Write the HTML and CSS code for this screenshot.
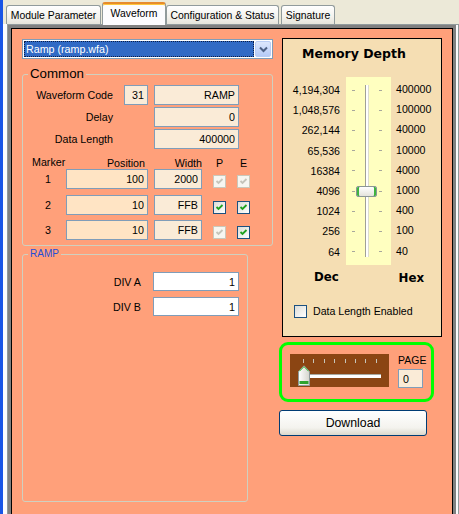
FILE: index.html
```html
<!DOCTYPE html>
<html lang="en">
<head>
    <meta charset="UTF-8">
    <title>Waveform</title>
    <link rel="stylesheet" href="styles.css">
</head>
<body>

<div class="tabs">
    <div class="tab tab-module">Module Parameter</div>
    <div class="tab tab-wave active">Waveform</div>
    <div class="tab tab-config">Configuration &amp; Status</div>
    <div class="tab tab-sign">Signature</div>
</div>

<div class="sheet">
    <div class="page">
        <div class="panel">

            <div class="left">
                <div class="combo">
                    <div class="combo-sel">Ramp (ramp.wfa)</div>
                    <div class="combo-btn">
                        <svg width="9" height="7" viewBox="0 0 9 7"><path d="M1 1.5 L4.5 5 L8 1.5" fill="none" stroke="#4d6185" stroke-width="2"/></svg>
                    </div>
                </div>

                <fieldset class="group common">
                    <legend>Common</legend>
                    <div class="row">
                        <label class="lbl">Waveform Code</label>
                        <input class="box code" type="text" value="31">
                        <input class="box wide near" type="text" value="RAMP">
                    </div>
                    <div class="row">
                        <label class="lbl">Delay</label>
                        <input class="box wide far" type="text" value="0">
                    </div>
                    <div class="row">
                        <label class="lbl">Data Length</label>
                        <input class="box wide far" type="text" value="400000">
                    </div>

                    <div class="mk-row mk-head">
                        <span class="c-num head-marker">Marker</span>
                        <span class="c-pos">Position</span>
                        <span class="c-wid">Width</span>
                        <span class="c-p">P</span>
                        <span class="c-e">E</span>
                    </div>
                    <div class="mk-row">
                        <span class="c-num">1</span>
                        <input class="box c-pos pos" type="text" value="100">
                        <input class="box c-wid" type="text" value="2000">
                        <span class="c-p chk off"><svg width="11" height="11" viewBox="0 0 11 11"><path d="M2.5 5 L4.5 7 L8.5 3" fill="none" stroke="#c5c4ba" stroke-width="1.8"/></svg></span>
                        <span class="c-e chk off"><svg width="11" height="11" viewBox="0 0 11 11"><path d="M2.5 5 L4.5 7 L8.5 3" fill="none" stroke="#c5c4ba" stroke-width="1.8"/></svg></span>
                    </div>
                    <div class="mk-row">
                        <span class="c-num">2</span>
                        <input class="box c-pos pos" type="text" value="10">
                        <input class="box c-wid" type="text" value="FFB">
                        <span class="c-p chk on"><svg width="11" height="11" viewBox="0 0 11 11"><path d="M2.5 5 L4.5 7 L8.5 3" fill="none" stroke="#21a121" stroke-width="1.8"/></svg></span>
                        <span class="c-e chk on"><svg width="11" height="11" viewBox="0 0 11 11"><path d="M2.5 5 L4.5 7 L8.5 3" fill="none" stroke="#21a121" stroke-width="1.8"/></svg></span>
                    </div>
                    <div class="mk-row">
                        <span class="c-num">3</span>
                        <input class="box c-pos pos" type="text" value="10">
                        <input class="box c-wid" type="text" value="FFB">
                        <span class="c-p chk off"><svg width="11" height="11" viewBox="0 0 11 11"><path d="M2.5 5 L4.5 7 L8.5 3" fill="none" stroke="#c5c4ba" stroke-width="1.8"/></svg></span>
                        <span class="c-e chk on"><svg width="11" height="11" viewBox="0 0 11 11"><path d="M2.5 5 L4.5 7 L8.5 3" fill="none" stroke="#21a121" stroke-width="1.8"/></svg></span>
                    </div>
                </fieldset>

                <fieldset class="group ramp">
                    <legend>RAMP</legend>
                    <div class="row">
                        <label class="lbl-div">DIV A</label>
                        <input class="box white" type="text" value="1">
                    </div>
                    <div class="row">
                        <label class="lbl-div">DIV B</label>
                        <input class="box white" type="text" value="1">
                    </div>
                </fieldset>
            </div>

            <div class="right">
                <div class="memory">
                    <div class="mem-title">Memory Depth</div>
                    <div class="scale">
                        <div class="dec-col">
                            <div>4,194,304</div>
                            <div>1,048,576</div>
                            <div>262,144</div>
                            <div>65,536</div>
                            <div>16384</div>
                            <div>4096</div>
                            <div>1024</div>
                            <div>256</div>
                            <div>64</div>
                        </div>
                        <div class="band">
                            <div class="tick-row"><i></i><i></i></div>
                            <div class="tick-row"><i></i><i></i></div>
                            <div class="tick-row"><i></i><i></i></div>
                            <div class="tick-row"><i></i><i></i></div>
                            <div class="tick-row"><i></i><i></i></div>
                            <div class="tick-row"><i></i><i></i></div>
                            <div class="tick-row"><i></i><i></i></div>
                            <div class="tick-row"><i></i><i></i></div>
                            <div class="tick-row"><i></i><i></i></div>
                            <div class="v-track"></div>
                            <div class="v-thumb"></div>
                        </div>
                        <div class="hex-col">
                            <div>400000</div>
                            <div>100000</div>
                            <div>40000</div>
                            <div>10000</div>
                            <div>4000</div>
                            <div>1000</div>
                            <div>400</div>
                            <div>100</div>
                            <div>40</div>
                        </div>
                    </div>
                    <div class="scale-foot">
                        <span class="foot-dec">Dec</span>
                        <span class="foot-hex">Hex</span>
                    </div>
                    <div class="chk-line">
                        <span class="chk on empty"></span>
                        <span>Data Length Enabled</span>
                    </div>
                </div>

                <div class="pager">
                    <div class="page-slider">
                        <div class="h-ticks"><i></i><i></i><i></i><i></i><i></i><i></i><i></i><i></i></div>
                        <div class="h-track"></div>
                        <svg class="h-thumb" width="12" height="21" viewBox="0 0 12 21">
                            <defs>
                                <linearGradient id="thumbfill" x1="0" y1="0" x2="1" y2="0">
                                    <stop offset="0" stop-color="#ffffff"/>
                                    <stop offset="1" stop-color="#d4d4cc"/>
                                </linearGradient>
                            </defs>
                            <path d="M0.5 6.5 L6 0.8 L11.5 6.5 L11.5 20.5 L0.5 20.5 Z" fill="url(#thumbfill)" stroke="#8e9a9a"/>
                            <path d="M1.5 6.3 L6 1.8 L10.5 6.3" fill="none" stroke="#4fc94f" stroke-width="1"/>
                            <rect x="1.5" y="16" width="9" height="3" fill="#2ea32e"/>
                        </svg>
                    </div>
                    <div class="page-num">
                        <div class="page-lbl">PAGE</div>
                        <input class="box page-box" type="text" value="0">
                    </div>
                </div>

                <button class="download" type="button">Download</button>
            </div>

        </div>
    </div>
</div>

</body>
</html>
```

FILE: styles.css
```css
body {
    margin: 0;
    height: 514px;
    overflow: hidden;
    border-left: 3px solid #1955e6;
    background-color: #ece9d8;
    font-family: "Liberation Sans", Arial, sans-serif;
    font-size: 10.7px;
    color: #000;
}

/* ---- tabs ---- */
.tabs {
    height: 24px;
    display: flex;
    align-items: flex-end;
    padding-left: 3px;
}

.tab {
    height: 19px;
    box-sizing: border-box;
    border: 1px solid #919b9c;
    border-bottom: none;
    border-radius: 3px 3px 0 0;
    background: linear-gradient(#ffffff, #f3f2ed 60%, #e6e4db);
    font-size: 10.4px;
    line-height: 19px;
    text-align: center;
    white-space: nowrap;
}

.tab-module { width: 95px; margin-right: 1px; }
.tab-wave { width: 64px; }
.tab-config { width: 113px; margin-right: 2px; }
.tab-sign { width: 54px; }

.tab.active {
    position: relative;
    height: 23px;
    margin-bottom: -1px;
    border-top: 2px solid #e68b2c;
    box-shadow: inset 0 1px 0 #ffc73c;
    background: #fcfcfe;
    line-height: 19px;
}

/* ---- tab page ---- */
.sheet {
    width: 456px;
    background-color: #fcfcfe;
    padding-left: 4px;
    box-sizing: border-box;
}

.page {
    border: 1px solid #919b9c;
    border-bottom: none;
    padding-right: 2px;
}

.panel {
    height: 476px;
    display: flex;
    align-items: flex-start;
    background-color: #ffa07a;
    border: 3px solid #808080;
    border-bottom: none;
    box-shadow: inset 1px 1px 0 #000, inset -1px 0 0 #000;
    padding: 10px 0 0 11px;
}

/* ---- left column ---- */
.left {
    width: 251px;
    margin-top: 1px;
}

.combo {
    height: 20px;
    box-sizing: border-box;
    border: 1px solid #7f9db9;
    background: #fff;
    display: flex;
    padding: 1px;
}

.combo-sel {
    flex: 1;
    background-color: #316ac5;
    color: #fff;
    border: 1px dotted #0c1d45;
    line-height: 14px;
    padding-left: 1px;
}

.combo-btn {
    width: 16px;
    margin-left: 1px;
    background: linear-gradient(#dce7fd, #b6cbf7);
    border: 1px solid #b9cdf5;
    border-radius: 2px;
    box-sizing: border-box;
    display: flex;
    align-items: center;
    justify-content: center;
}

.group {
    margin: 0;
    min-width: 0;
    border: 1px solid #d0d0bf;
    border-radius: 3px;
    padding: 0;
}

.group legend {
    margin-left: 5px;
    padding: 0 2px;
}

.common {
    margin-top: 8px;
    padding-bottom: 5px;
}

.common legend {
    font-size: 13.3px;
    line-height: 14px;
}

.ramp {
    width: 226px;
    box-sizing: border-box;
    margin-top: 2px;
    padding-top: 10px;
    padding-bottom: 185px;
}

.ramp legend {
    font-size: 10px;
    line-height: 12px;
    color: #1f4fd8;
}

.row {
    display: flex;
    align-items: center;
    margin-top: 2px;
}

.common .row:first-of-type {
    margin-top: 4px;
}

.ramp .row + .row {
    margin-top: 6px;
}

.lbl {
    width: 90px;
    text-align: right;
}

.lbl-div {
    width: 118px;
    text-align: right;
}

.box {
    height: 20px;
    box-sizing: border-box;
    margin: 0;
    border: 1px solid #7f9db9;
    padding: 0 3px;
    background-color: #faebd7;
    font-family: "Liberation Sans", Arial, sans-serif;
    font-size: 10.7px;
    color: #000;
    text-align: right;
    outline: none;
}

.box.code { width: 24px; margin-left: 11px; }
.box.wide { width: 85px; }
.box.near { margin-left: 6px; }
.box.far { margin-left: 41px; }

.box.white {
    width: 86px;
    height: 19px;
    margin-left: 12px;
    background-color: #fff;
}

.box.pos {
    background-color: #ffe4c4;
}

.mk-row {
    display: flex;
    align-items: flex-end;
    margin-top: 5.5px;
}

.mk-head {
    margin-top: 8px;
    align-items: center;
    height: 12px;
}

.mk-head + .mk-row {
    margin-top: 0;
}

.c-num {
    width: 43px;
    padding-left: 7px;
    box-sizing: border-box;
    text-align: center;
    align-self: center;
    white-space: nowrap;
}

.head-marker {
    text-align: left;
    padding-left: 9px;
    padding-bottom: 3px;
}

.c-pos {
    width: 82px;
    text-align: right;
}

span.c-pos { padding-right: 3px; box-sizing: border-box; }

.c-wid {
    width: 48px;
    margin-left: 6px;
    text-align: right;
}

.c-p, .c-e {
    width: 13px;
    margin-left: 11px;
    text-align: center;
}

.chk {
    height: 13px;
    box-sizing: border-box;
    display: flex;
    align-items: center;
    justify-content: center;
    margin-bottom: 1px;
}

.chk.off {
    border: 1px solid #cac8bb;
    background-color: #f7f6f1;
}

.chk.on {
    border: 1px solid #1c5180;
    background: linear-gradient(135deg, #dcdcd7, #ffffff);
}

/* ---- right column ---- */
.right {
    width: 163px;
    margin-left: 6px;
}

.memory {
    width: 160px;
    height: 299px;
    margin-left: 3px;
    box-sizing: border-box;
    border: 1px solid #000;
    background-color: #f5deb3;
}

.mem-title {
    margin-top: 7px;
    padding-left: 19px;
    font-family: "DejaVu Sans", Verdana, sans-serif;
    font-weight: bold;
    font-size: 12.5px;
    line-height: 16px;
}

.scale {
    display: flex;
    margin-top: 15px;
}

.dec-col, .hex-col {
    padding-top: 3px;
    font-size: 10.6px;
    line-height: 20.2px;
}

.dec-col {
    width: 57px;
    text-align: right;
}

.hex-col {
    margin-left: 5px;
    padding-top: 2px;
}

.band {
    position: relative;
    width: 45px;
    margin-left: 6px;
    padding: 3px 0;
    background-color: #ffffc0;
}

.tick-row {
    height: 20.2px;
    display: flex;
    align-items: center;
}

.tick-row i {
    width: 3px;
    height: 1px;
    margin-left: 6px;
    background-color: #a8a89c;
}

.tick-row i + i {
    margin-left: 24px;
}

.v-track {
    position: absolute;
    left: 19px;
    top: 8px;
    width: 2px;
    height: 172px;
    background-color: #fff;
    border-left: 1px solid #a0a096;
    border-right: 1px solid #dcdcd0;
}

.v-thumb {
    position: absolute;
    left: 10px;
    top: 109px;
    width: 21px;
    height: 11px;
    box-sizing: border-box;
    border: 1px solid #8b9696;
    border-radius: 2px;
    background: linear-gradient(#ffffff, #e4e3dc);
    box-shadow: inset 2px 0 0 #3fb53f, inset -2px 0 0 #3fb53f;
}

.scale-foot {
    display: flex;
    margin-top: 5px;
    font-family: "DejaVu Sans", Verdana, sans-serif;
    font-weight: bold;
    font-size: 11.8px;
    line-height: 14px;
}

.foot-dec { margin-left: 31px; }
.foot-hex { margin-left: auto; margin-right: 17px; margin-top: 1px; }

.chk-line {
    display: flex;
    align-items: center;
    margin-top: 20px;
    padding-left: 11px;
    font-size: 10.6px;
}

.chk-line .chk {
    width: 13px;
    margin: 0 6px 0 0;
}

.pager {
    width: 155px;
    height: 60px;
    margin-top: 5px;
    box-sizing: border-box;
    border: 3px solid #00ff00;
    border-radius: 9px;
    display: flex;
    padding: 9px 0 0 8px;
}

.page-slider {
    position: relative;
    width: 99px;
    height: 33px;
    background-color: #8b4513;
}

.h-ticks {
    display: flex;
    padding: 5px 0 0 13px;
}

.h-ticks i {
    width: 1px;
    height: 4px;
    margin-right: 9.4px;
    background-color: #c8c4b8;
}

.h-track {
    width: 73px;
    height: 3px;
    margin: 11px 0 0 18px;
    background-color: #fff;
    border-top: 1px solid #a9a9a0;
}

.h-thumb {
    position: absolute;
    left: 8px;
    top: 11px;
}

.page-num {
    margin-left: 9px;
}

.page-lbl {
    font-size: 10.5px;
    line-height: 12px;
}

.box.page-box {
    width: 25px;
    height: 19px;
    margin-top: 3px;
    text-align: left;
    padding-left: 4px;
}

.download {
    display: block;
    width: 148px;
    height: 26px;
    margin-top: 8px;
    border: 1px solid #003c74;
    border-radius: 3px;
    background: linear-gradient(#ffffff, #f4f3ee 70%, #dcd8cc);
    font-family: "Liberation Sans", Arial, sans-serif;
    font-size: 12.3px;
    color: #000;
    padding: 0;
}
```
